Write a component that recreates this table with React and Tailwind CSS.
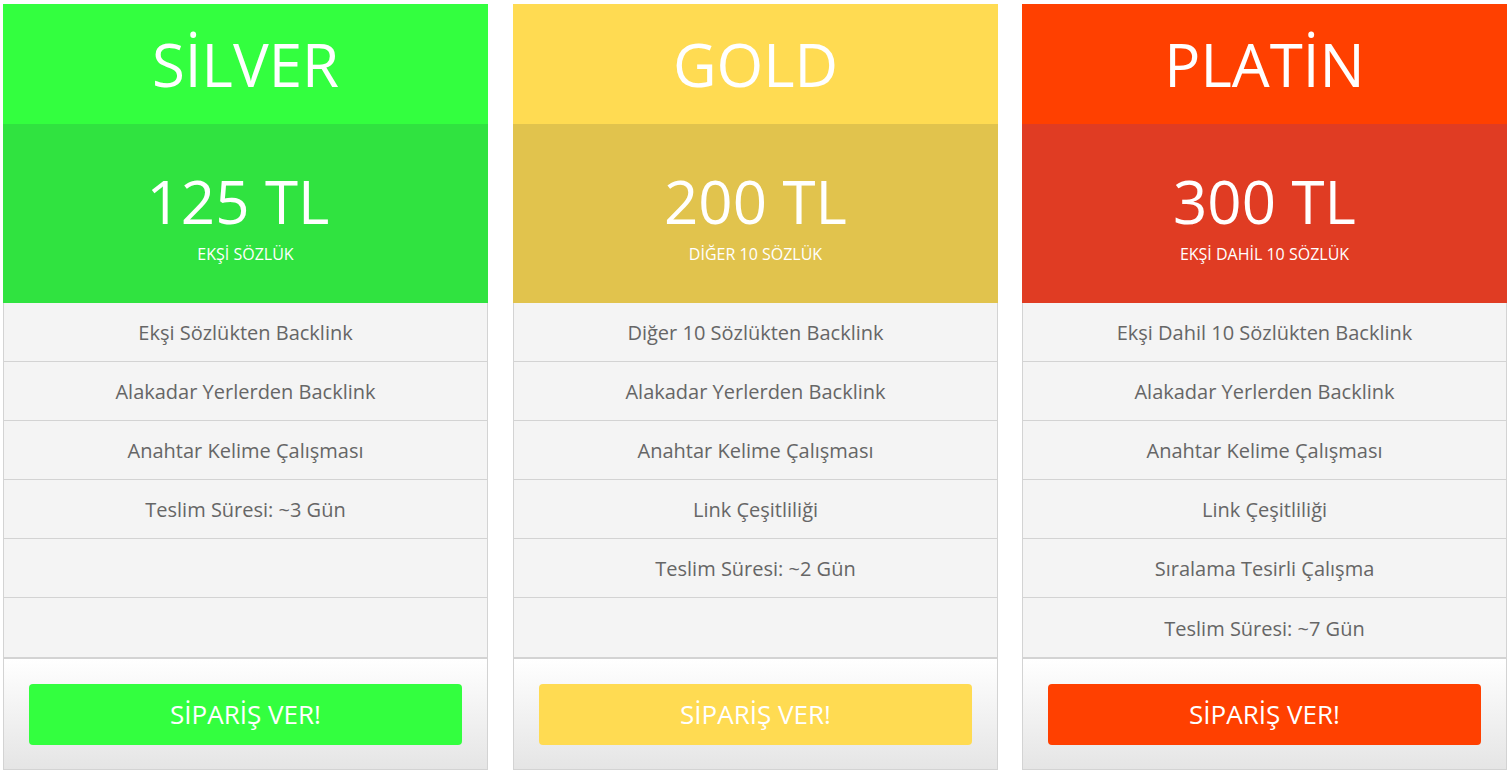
import React from 'react';

const plans = [
  {
    name: 'SİLVER',
    price: '125 TL',
    sub: 'EKŞİ SÖZLÜK',
    head: 'bg-[#33ff3f]',
    priceBg: 'bg-[#30e340]',
    btn: 'bg-[#33ff3f]',
    shift: 'pr-[15px]',
    space: 'mr-[25px]',
    features: ['Ekşi Sözlükten Backlink', 'Alakadar Yerlerden Backlink', 'Anahtar Kelime Çalışması', 'Teslim Süresi: ~3 Gün', '', ''],
  },
  {
    name: 'GOLD',
    price: '200 TL',
    sub: 'DİĞER 10 SÖZLÜK',
    head: 'bg-[#ffdb52]',
    priceBg: 'bg-[#e1c34d]',
    btn: 'bg-[#ffdb52]',
    shift: '',
    space: 'mr-[24px]',
    features: ['Diğer 10 Sözlükten Backlink', 'Alakadar Yerlerden Backlink', 'Anahtar Kelime Çalışması', 'Link Çeşitliliği', 'Teslim Süresi: ~2 Gün', ''],
  },
  {
    name: 'PLATİN',
    price: '300 TL',
    sub: 'EKŞİ DAHİL 10 SÖZLÜK',
    head: 'bg-[#ff4000]',
    priceBg: 'bg-[#e03c23]',
    btn: 'bg-[#ff4000]',
    shift: '',
    space: '',
    features: ['Ekşi Dahil 10 Sözlükten Backlink', 'Alakadar Yerlerden Backlink', 'Anahtar Kelime Çalışması', 'Link Çeşitliliği', 'Sıralama Tesirli Çalışma', 'Teslim Süresi: ~7 Gün'],
  },
];

const PlanCard = ({ plan }) => (
  <div className={`w-[485px] flex flex-col ${plan.space}`}>
    {/* Header */}
    <div className={`${plan.head} h-[120px] flex items-center justify-center`}>
      <h2 className="text-[60px] leading-none text-white font-normal">{plan.name}</h2>
    </div>

    {/* Price */}
    <div className={`${plan.priceBg} h-[179px] flex flex-col items-center justify-center pt-[5px]`}>
      <p className={`text-[60px] leading-none text-white ${plan.shift}`}>{plan.price}</p>
      <p className="text-[16px] leading-none text-white mt-[15px]">{plan.sub}</p>
    </div>

    {/* Features */}
    <div className="border-l border-r border-[#d3d3d3]">
      {plan.features.map((f, idx) => (
        <div
          key={idx}
          className={`h-[59px] bg-[#f4f4f4] flex items-center justify-center pt-[2px] text-[20px] text-[#666] ${idx < 5 ? 'border-b border-[#d3d3d3]' : ''}`}
        >
          {f}
        </div>
      ))}

      {/* Footer */}
      <div className="border-t-2 border-b border-[#d3d3d3] h-[113px] bg-gradient-to-b from-[#ffffff] to-[#e5e5e5] flex items-center px-[25px]">
        <button className={`${plan.btn} w-full h-[61px] rounded-[4px] text-white text-[26px]`}>
          SİPARİŞ VER!
        </button>
      </div>
    </div>
  </div>
);

const App = () => {
  return (
    <div className="min-h-screen bg-white pt-[4px] pl-[3px] font-['Open_Sans',sans-serif]">
      <div className="flex">
        {plans.map((p, i) => (
          <PlanCard key={i} plan={p} />
        ))}
      </div>
    </div>
  );
};

export default App;
